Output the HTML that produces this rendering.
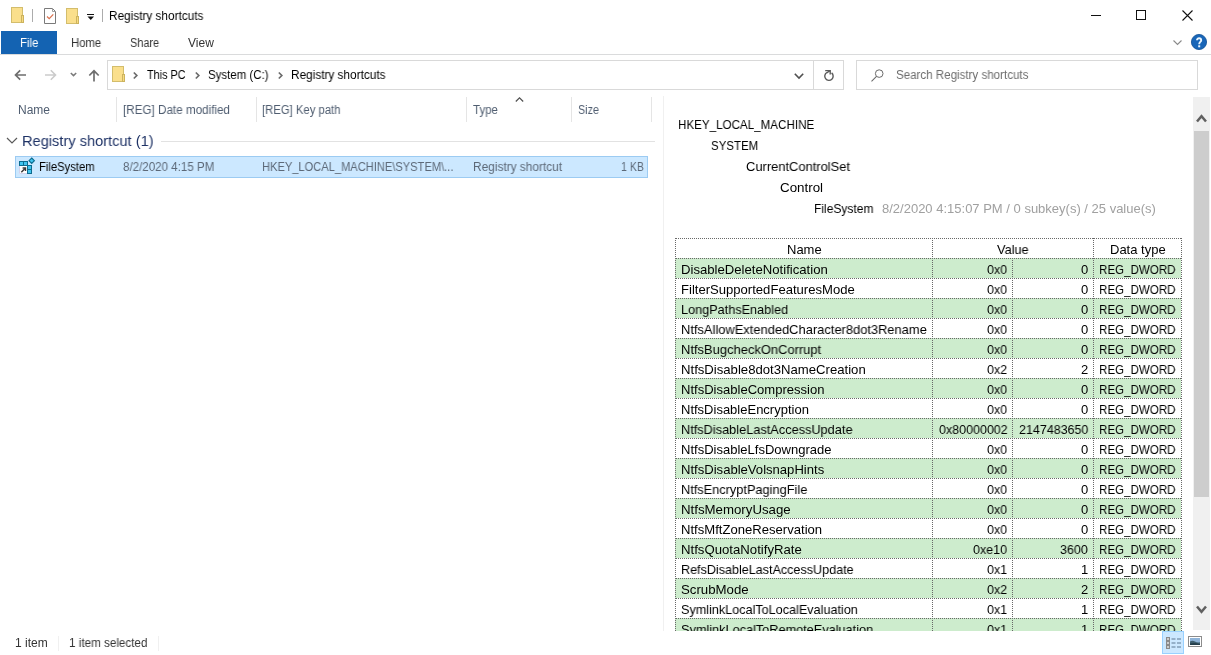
<!DOCTYPE html>
<html><head><meta charset="utf-8">
<style>
html,body{margin:0;padding:0;background:#fff;width:1211px;height:655px;overflow:hidden;position:relative;font-family:"Liberation Sans",sans-serif;}
.abs{position:absolute;}
.t{position:absolute;white-space:pre;line-height:1;transform-origin:0 0;will-change:transform;font-family:"Liberation Sans",sans-serif;}
.hd{position:absolute;height:1px;background-image:linear-gradient(to right,transparent 50%,#686868 50%);background-size:2px 1px;}
.vd{position:absolute;width:1px;background-image:linear-gradient(to bottom,#686868 50%,transparent 50%);background-size:1px 2px;}
svg{position:absolute;overflow:visible;}
</style></head><body>
<!-- ribbon -->
<div class="abs" style="left:1px;top:31px;width:56px;height:23px;background:#1463b2"></div>
<div class="abs" style="left:0;top:54px;width:1211px;height:1px;background:#dadbdc"></div>
<!-- address box -->
<div class="abs" style="left:107px;top:60px;width:735px;height:28px;border:1px solid #d9d9d9"></div>
<div class="abs" style="left:813px;top:61px;width:1px;height:28px;background:#d9d9d9"></div>
<!-- search box -->
<div class="abs" style="left:856px;top:60px;width:340px;height:28px;border:1px solid #d9d9d9"></div>
<!-- column dividers -->
<div class="abs" style="left:116px;top:97px;width:1px;height:25px;background:#e5e5e5"></div>
<div class="abs" style="left:256px;top:97px;width:1px;height:25px;background:#e5e5e5"></div>
<div class="abs" style="left:466px;top:97px;width:1px;height:25px;background:#e5e5e5"></div>
<div class="abs" style="left:571px;top:97px;width:1px;height:25px;background:#e5e5e5"></div>
<div class="abs" style="left:651px;top:97px;width:1px;height:25px;background:#e5e5e5"></div>
<!-- pane separator -->
<div class="abs" style="left:663px;top:96px;width:1px;height:535px;background:#f0f0f0"></div>
<!-- group line -->
<div class="abs" style="left:161px;top:141px;width:494px;height:1px;background:#e2e2e2"></div>
<!-- selection -->
<div class="abs" style="left:15px;top:156px;width:631px;height:20px;border:1px solid #9ccbf2;background:#cce8ff"></div>
<!-- scrollbar -->
<div class="abs" style="left:1193px;top:97px;width:17px;height:533px;background:#f0f0f0"></div>
<div class="abs" style="left:1194px;top:131px;width:15px;height:366px;background:#cdcdcd"></div>
<!-- status bar view buttons -->
<div class="abs" style="left:58px;top:636px;width:1px;height:15px;background:#f0f0f0"></div>
<div class="abs" style="left:158px;top:636px;width:1px;height:15px;background:#f0f0f0"></div>
<div class="abs" style="left:1162px;top:631px;width:20px;height:21px;border:1px solid #99d1ff;background:#cce8ff"></div>
<div class="abs" style="left:675px;top:258px;width:506px;height:20px;background:#cdeccd"></div>
<div class="abs" style="left:675px;top:298px;width:506px;height:20px;background:#cdeccd"></div>
<div class="abs" style="left:675px;top:338px;width:506px;height:20px;background:#cdeccd"></div>
<div class="abs" style="left:675px;top:378px;width:506px;height:20px;background:#cdeccd"></div>
<div class="abs" style="left:675px;top:418px;width:506px;height:20px;background:#cdeccd"></div>
<div class="abs" style="left:675px;top:458px;width:506px;height:20px;background:#cdeccd"></div>
<div class="abs" style="left:675px;top:498px;width:506px;height:20px;background:#cdeccd"></div>
<div class="abs" style="left:675px;top:538px;width:506px;height:20px;background:#cdeccd"></div>
<div class="abs" style="left:675px;top:578px;width:506px;height:20px;background:#cdeccd"></div>
<div class="abs" style="left:675px;top:618px;width:506px;height:20px;background:#cdeccd"></div>
<div class="hd" style="left:675px;top:238px;width:507px"></div>
<div class="hd" style="left:675px;top:258px;width:507px"></div>
<div class="hd" style="left:675px;top:278px;width:507px"></div>
<div class="hd" style="left:675px;top:298px;width:507px"></div>
<div class="hd" style="left:675px;top:318px;width:507px"></div>
<div class="hd" style="left:675px;top:338px;width:507px"></div>
<div class="hd" style="left:675px;top:358px;width:507px"></div>
<div class="hd" style="left:675px;top:378px;width:507px"></div>
<div class="hd" style="left:675px;top:398px;width:507px"></div>
<div class="hd" style="left:675px;top:418px;width:507px"></div>
<div class="hd" style="left:675px;top:438px;width:507px"></div>
<div class="hd" style="left:675px;top:458px;width:507px"></div>
<div class="hd" style="left:675px;top:478px;width:507px"></div>
<div class="hd" style="left:675px;top:498px;width:507px"></div>
<div class="hd" style="left:675px;top:518px;width:507px"></div>
<div class="hd" style="left:675px;top:538px;width:507px"></div>
<div class="hd" style="left:675px;top:558px;width:507px"></div>
<div class="hd" style="left:675px;top:578px;width:507px"></div>
<div class="hd" style="left:675px;top:598px;width:507px"></div>
<div class="hd" style="left:675px;top:618px;width:507px"></div>
<div class="hd" style="left:675px;top:638px;width:507px"></div>
<div class="vd" style="left:675px;top:238px;height:400px"></div>
<div class="vd" style="left:932px;top:238px;height:400px"></div>
<div class="vd" style="left:1093px;top:238px;height:400px"></div>
<div class="vd" style="left:1181px;top:238px;height:400px"></div>
<div class="vd" style="left:1012px;top:258px;height:380px"></div>
<div class="t" style="left:787.1px;top:243px;font-size:13px;color:#000;">Name</div>
<div class="t" style="left:997.0px;top:243px;font-size:13px;color:#000;transform:scaleX(0.9800);">Value</div>
<div class="t" style="left:1110.0px;top:243px;font-size:13px;color:#000;">Data type</div>
<div class="t" style="left:680.5px;top:263px;font-size:13px;color:#000;transform:scaleX(1.0107);">DisableDeleteNotification</div>
<div class="t" style="left:987.1px;top:263px;font-size:13px;color:#000;transform:scaleX(0.9600);">0x0</div>
<div class="t" style="left:1081.3px;top:263px;font-size:13px;color:#000;transform:scaleX(0.9600);">0</div>
<div class="t" style="left:1098.8px;top:263px;font-size:13px;color:#000;transform:scaleX(0.8900);">REG_DWORD</div>
<div class="t" style="left:680.5px;top:283px;font-size:13px;color:#000;transform:scaleX(1.0058);">FilterSupportedFeaturesMode</div>
<div class="t" style="left:987.1px;top:283px;font-size:13px;color:#000;transform:scaleX(0.9600);">0x0</div>
<div class="t" style="left:1081.3px;top:283px;font-size:13px;color:#000;transform:scaleX(0.9600);">0</div>
<div class="t" style="left:1098.8px;top:283px;font-size:13px;color:#000;transform:scaleX(0.8900);">REG_DWORD</div>
<div class="t" style="left:680.5px;top:303px;font-size:13px;color:#000;transform:scaleX(0.9747);">LongPathsEnabled</div>
<div class="t" style="left:987.1px;top:303px;font-size:13px;color:#000;transform:scaleX(0.9600);">0x0</div>
<div class="t" style="left:1081.3px;top:303px;font-size:13px;color:#000;transform:scaleX(0.9600);">0</div>
<div class="t" style="left:1098.8px;top:303px;font-size:13px;color:#000;transform:scaleX(0.8900);">REG_DWORD</div>
<div class="t" style="left:680.5px;top:323px;font-size:13px;color:#000;transform:scaleX(0.9917);">NtfsAllowExtendedCharacter8dot3Rename</div>
<div class="t" style="left:987.1px;top:323px;font-size:13px;color:#000;transform:scaleX(0.9600);">0x0</div>
<div class="t" style="left:1081.3px;top:323px;font-size:13px;color:#000;transform:scaleX(0.9600);">0</div>
<div class="t" style="left:1098.8px;top:323px;font-size:13px;color:#000;transform:scaleX(0.8900);">REG_DWORD</div>
<div class="t" style="left:680.5px;top:343px;font-size:13px;color:#000;transform:scaleX(0.9950);">NtfsBugcheckOnCorrupt</div>
<div class="t" style="left:987.1px;top:343px;font-size:13px;color:#000;transform:scaleX(0.9600);">0x0</div>
<div class="t" style="left:1081.3px;top:343px;font-size:13px;color:#000;transform:scaleX(0.9600);">0</div>
<div class="t" style="left:1098.8px;top:343px;font-size:13px;color:#000;transform:scaleX(0.8900);">REG_DWORD</div>
<div class="t" style="left:680.5px;top:363px;font-size:13px;color:#000;transform:scaleX(1.0103);">NtfsDisable8dot3NameCreation</div>
<div class="t" style="left:987.1px;top:363px;font-size:13px;color:#000;transform:scaleX(0.9600);">0x2</div>
<div class="t" style="left:1081.3px;top:363px;font-size:13px;color:#000;transform:scaleX(0.9600);">2</div>
<div class="t" style="left:1098.8px;top:363px;font-size:13px;color:#000;transform:scaleX(0.8900);">REG_DWORD</div>
<div class="t" style="left:680.5px;top:383px;font-size:13px;color:#000;transform:scaleX(1.0031);">NtfsDisableCompression</div>
<div class="t" style="left:987.1px;top:383px;font-size:13px;color:#000;transform:scaleX(0.9600);">0x0</div>
<div class="t" style="left:1081.3px;top:383px;font-size:13px;color:#000;transform:scaleX(0.9600);">0</div>
<div class="t" style="left:1098.8px;top:383px;font-size:13px;color:#000;transform:scaleX(0.8900);">REG_DWORD</div>
<div class="t" style="left:680.5px;top:403px;font-size:13px;color:#000;transform:scaleX(0.9993);">NtfsDisableEncryption</div>
<div class="t" style="left:987.1px;top:403px;font-size:13px;color:#000;transform:scaleX(0.9600);">0x0</div>
<div class="t" style="left:1081.3px;top:403px;font-size:13px;color:#000;transform:scaleX(0.9600);">0</div>
<div class="t" style="left:1098.8px;top:403px;font-size:13px;color:#000;transform:scaleX(0.8900);">REG_DWORD</div>
<div class="t" style="left:680.5px;top:423px;font-size:13px;color:#000;transform:scaleX(0.9808);">NtfsDisableLastAccessUpdate</div>
<div class="t" style="left:938.5px;top:423px;font-size:13px;color:#000;transform:scaleX(0.9600);">0x80000002</div>
<div class="t" style="left:1018.8px;top:423px;font-size:13px;color:#000;transform:scaleX(0.9600);">2147483650</div>
<div class="t" style="left:1098.8px;top:423px;font-size:13px;color:#000;transform:scaleX(0.8900);">REG_DWORD</div>
<div class="t" style="left:680.5px;top:443px;font-size:13px;color:#000;transform:scaleX(1.0014);">NtfsDisableLfsDowngrade</div>
<div class="t" style="left:987.1px;top:443px;font-size:13px;color:#000;transform:scaleX(0.9600);">0x0</div>
<div class="t" style="left:1081.3px;top:443px;font-size:13px;color:#000;transform:scaleX(0.9600);">0</div>
<div class="t" style="left:1098.8px;top:443px;font-size:13px;color:#000;transform:scaleX(0.8900);">REG_DWORD</div>
<div class="t" style="left:680.5px;top:463px;font-size:13px;color:#000;transform:scaleX(1.0059);">NtfsDisableVolsnapHints</div>
<div class="t" style="left:987.1px;top:463px;font-size:13px;color:#000;transform:scaleX(0.9600);">0x0</div>
<div class="t" style="left:1081.3px;top:463px;font-size:13px;color:#000;transform:scaleX(0.9600);">0</div>
<div class="t" style="left:1098.8px;top:463px;font-size:13px;color:#000;transform:scaleX(0.8900);">REG_DWORD</div>
<div class="t" style="left:680.5px;top:483px;font-size:13px;color:#000;transform:scaleX(0.9819);">NtfsEncryptPagingFile</div>
<div class="t" style="left:987.1px;top:483px;font-size:13px;color:#000;transform:scaleX(0.9600);">0x0</div>
<div class="t" style="left:1081.3px;top:483px;font-size:13px;color:#000;transform:scaleX(0.9600);">0</div>
<div class="t" style="left:1098.8px;top:483px;font-size:13px;color:#000;transform:scaleX(0.8900);">REG_DWORD</div>
<div class="t" style="left:680.5px;top:503px;font-size:13px;color:#000;transform:scaleX(1.0191);">NtfsMemoryUsage</div>
<div class="t" style="left:987.1px;top:503px;font-size:13px;color:#000;transform:scaleX(0.9600);">0x0</div>
<div class="t" style="left:1081.3px;top:503px;font-size:13px;color:#000;transform:scaleX(0.9600);">0</div>
<div class="t" style="left:1098.8px;top:503px;font-size:13px;color:#000;transform:scaleX(0.8900);">REG_DWORD</div>
<div class="t" style="left:680.5px;top:523px;font-size:13px;color:#000;transform:scaleX(1.0066);">NtfsMftZoneReservation</div>
<div class="t" style="left:987.1px;top:523px;font-size:13px;color:#000;transform:scaleX(0.9600);">0x0</div>
<div class="t" style="left:1081.3px;top:523px;font-size:13px;color:#000;transform:scaleX(0.9600);">0</div>
<div class="t" style="left:1098.8px;top:523px;font-size:13px;color:#000;transform:scaleX(0.8900);">REG_DWORD</div>
<div class="t" style="left:680.5px;top:543px;font-size:13px;color:#000;transform:scaleX(1.0133);">NtfsQuotaNotifyRate</div>
<div class="t" style="left:973.2px;top:543px;font-size:13px;color:#000;transform:scaleX(0.9600);">0xe10</div>
<div class="t" style="left:1060.4px;top:543px;font-size:13px;color:#000;transform:scaleX(0.9600);">3600</div>
<div class="t" style="left:1098.8px;top:543px;font-size:13px;color:#000;transform:scaleX(0.8900);">REG_DWORD</div>
<div class="t" style="left:680.5px;top:563px;font-size:13px;color:#000;transform:scaleX(0.9670);">RefsDisableLastAccessUpdate</div>
<div class="t" style="left:987.1px;top:563px;font-size:13px;color:#000;transform:scaleX(0.9600);">0x1</div>
<div class="t" style="left:1081.3px;top:563px;font-size:13px;color:#000;transform:scaleX(0.9600);">1</div>
<div class="t" style="left:1098.8px;top:563px;font-size:13px;color:#000;transform:scaleX(0.8900);">REG_DWORD</div>
<div class="t" style="left:680.5px;top:583px;font-size:13px;color:#000;transform:scaleX(1.0183);">ScrubMode</div>
<div class="t" style="left:987.1px;top:583px;font-size:13px;color:#000;transform:scaleX(0.9600);">0x2</div>
<div class="t" style="left:1081.3px;top:583px;font-size:13px;color:#000;transform:scaleX(0.9600);">2</div>
<div class="t" style="left:1098.8px;top:583px;font-size:13px;color:#000;transform:scaleX(0.8900);">REG_DWORD</div>
<div class="t" style="left:680.5px;top:603px;font-size:13px;color:#000;transform:scaleX(0.9708);">SymlinkLocalToLocalEvaluation</div>
<div class="t" style="left:987.1px;top:603px;font-size:13px;color:#000;transform:scaleX(0.9600);">0x1</div>
<div class="t" style="left:1081.3px;top:603px;font-size:13px;color:#000;transform:scaleX(0.9600);">1</div>
<div class="t" style="left:1098.8px;top:603px;font-size:13px;color:#000;transform:scaleX(0.8900);">REG_DWORD</div>
<div class="t" style="left:680.5px;top:623px;font-size:13px;color:#000;transform:scaleX(0.9779);">SymlinkLocalToRemoteEvaluation</div>
<div class="t" style="left:987.1px;top:623px;font-size:13px;color:#000;transform:scaleX(0.9600);">0x1</div>
<div class="t" style="left:1081.3px;top:623px;font-size:13px;color:#000;transform:scaleX(0.9600);">1</div>
<div class="t" style="left:1098.8px;top:623px;font-size:13px;color:#000;transform:scaleX(0.8900);">REG_DWORD</div>
<div class="abs" style="left:664px;top:631px;width:529px;height:24px;background:#fff"></div>
<div class="abs" style="left:1162px;top:631px;width:20px;height:21px;border:1px solid #99d1ff;background:#cce8ff"></div>
<!-- folder 1 -->
<svg style="left:11px;top:7px" width="14" height="17" viewBox="0 0 14 17">
<rect x="0.5" y="0.5" width="11" height="15" fill="#fadf8c" stroke="#d3bd6c" stroke-width="1"/>
<rect x="10.5" y="8.5" width="2" height="7" fill="#f7da80" stroke="#ccb35e" stroke-width="1"/>
</svg>
<div class="abs" style="left:32px;top:9px;width:1px;height:13px;background:#acacac"></div>
<!-- doc with check -->
<svg style="left:44px;top:8px" width="13" height="16" viewBox="0 0 13 16">
<path d="M0.5 0.5 H8.5 L11.5 3.5 V15.5 H0.5 Z" fill="#fff" stroke="#7a7a7a" stroke-linejoin="miter"/>
<path d="M8.5 0.5 V3.5 H11.5" fill="none" stroke="#a0a0a0" stroke-linejoin="miter"/>
<path d="M3 8.5 L5.2 10.6 L9.3 6.3" fill="none" stroke="#d9714f" stroke-width="1.2"/>
</svg>
<!-- folder 2 -->
<svg style="left:66px;top:8px" width="14" height="16" viewBox="0 0 14 16">
<rect x="0.5" y="0.5" width="11" height="15" fill="#fadf8c" stroke="#d3bd6c" stroke-width="1"/>
<rect x="10.5" y="8.5" width="2" height="7" fill="#f7da80" stroke="#ccb35e" stroke-width="1"/>
</svg>
<!-- qat dropdown -->
<svg style="left:87px;top:14px" width="8" height="7" viewBox="0 0 8 7">
<rect x="0" y="0" width="7" height="1" fill="#111"/>
<path d="M0.5 2.5 H7 L3.75 6 Z" fill="#111"/>
</svg>
<div class="abs" style="left:102px;top:9px;width:1px;height:13px;background:#acacac"></div>
<!-- window controls -->
<div class="abs" style="left:1091px;top:15px;width:10px;height:1px;background:#111"></div>
<div class="abs" style="left:1136px;top:10px;width:8px;height:8px;border:1px solid #111"></div>
<svg style="left:1182px;top:10px" width="11" height="11" viewBox="0 0 11 11">
<path d="M0.5 0.5 L10.5 10.5 M10.5 0.5 L0.5 10.5" stroke="#111" stroke-width="1.1"/>
</svg>
<!-- ribbon chevron -->
<svg style="left:1173px;top:40px" width="9" height="5" viewBox="0 0 9 5">
<path d="M0.5 0.5 L4.5 4.5 L8.5 0.5" fill="none" stroke="#8a8a8a" stroke-width="1.1"/>
</svg>
<!-- help -->
<svg style="left:1191px;top:34px" width="16" height="16" viewBox="0 0 16 16">
<circle cx="8" cy="8" r="7.6" fill="#1966b8" stroke="#0f4f94" stroke-width="0.8"/>
<path d="M6 6.2 C6 3.6 10.2 3.6 10.2 6.2 C10.2 7.9 8.2 8 8.2 10.2" fill="none" stroke="#eaf6ff" stroke-width="1.9"/>
<rect x="7.2" y="11.3" width="2" height="2" fill="#eaf6ff"/>
</svg>
<!-- nav arrows -->
<svg style="left:14px;top:69px" width="13" height="12" viewBox="0 0 13 12">
<path d="M12 6 H1.8 M6.2 1.3 L1.5 6 L6.2 10.7" fill="none" stroke="#6e6e6e" stroke-width="1.7"/>
</svg>
<svg style="left:44px;top:69px" width="13" height="12" viewBox="0 0 13 12">
<path d="M1 6 H11.2 M6.8 1.3 L11.5 6 L6.8 10.7" fill="none" stroke="#cbcbcb" stroke-width="1.6"/>
</svg>
<svg style="left:70px;top:72px" width="7" height="5" viewBox="0 0 7 5">
<path d="M0.8 1 L3.5 3.6 L6.2 1" fill="none" stroke="#7a7a7a" stroke-width="1.5"/>
</svg>
<svg style="left:88px;top:69px" width="12" height="13" viewBox="0 0 12 13">
<path d="M6 12.5 V2 M1.3 6.5 L6 1.8 L10.7 6.5" fill="none" stroke="#6e6e6e" stroke-width="1.7"/>
</svg>
<!-- address folder -->
<svg style="left:112px;top:66px" width="14" height="16" viewBox="0 0 14 16">
<rect x="0.5" y="0.5" width="11" height="15" fill="#fadf8c" stroke="#d3bd6c" stroke-width="1"/>
<rect x="10.5" y="8.5" width="2" height="7" fill="#f7da80" stroke="#ccb35e" stroke-width="1"/>
</svg>
<svg style="left:133px;top:72px" width="5" height="7" viewBox="0 0 5 7">
<path d="M0.8 0.5 L3.8 3.5 L0.8 6.5" fill="none" stroke="#6a6a6a" stroke-width="1.7"/>
</svg>
<svg style="left:195px;top:72px" width="5" height="7" viewBox="0 0 5 7">
<path d="M0.8 0.5 L3.8 3.5 L0.8 6.5" fill="none" stroke="#6a6a6a" stroke-width="1.7"/>
</svg>
<svg style="left:278px;top:72px" width="5" height="7" viewBox="0 0 5 7">
<path d="M0.8 0.5 L3.8 3.5 L0.8 6.5" fill="none" stroke="#6a6a6a" stroke-width="1.7"/>
</svg>
<!-- address dropdown chevron -->
<svg style="left:794px;top:73px" width="10" height="6" viewBox="0 0 10 6">
<path d="M0.8 0.8 L5 5 L9.2 0.8" fill="none" stroke="#505050" stroke-width="1.6"/>
</svg>
<!-- refresh -->
<svg style="left:823px;top:69px" width="12" height="13" viewBox="0 0 12 13">
<path d="M8.6 3.9 A4.2 4.2 0 1 1 3.9 3.5" fill="none" stroke="#5a5a5a" stroke-width="1.4"/>
<path d="M2.2 1.6 H7.2 V5.6" fill="none" stroke="#5a5a5a" stroke-width="1.4"/>
<path d="M3.6 4 L7 1.6" fill="none" stroke="#5a5a5a" stroke-width="1.4"/>
</svg>
<!-- search icon -->
<svg style="left:871px;top:69px" width="13" height="13" viewBox="0 0 13 13">
<circle cx="8.2" cy="4.6" r="3.8" fill="none" stroke="#6a6a6a" stroke-width="1"/>
<path d="M5.5 7.3 L0.5 12.3" stroke="#6a6a6a" stroke-width="1.1"/>
</svg>
<!-- sort chevron -->
<svg style="left:515px;top:97px" width="9" height="5" viewBox="0 0 9 5">
<path d="M0.8 4.5 L4.5 0.8 L8.2 4.5" fill="none" stroke="#505050" stroke-width="1.2"/>
</svg>
<!-- group chevron -->
<svg style="left:6px;top:137px" width="12" height="7" viewBox="0 0 12 7">
<path d="M1 1 L6 6 L11 1" fill="none" stroke="#5a5a5a" stroke-width="1.2"/>
</svg>
<!-- reg shortcut icon -->
<svg style="left:19px;top:157px" width="17" height="18" viewBox="0 0 17 18">
<rect x="0" y="4" width="9" height="5" fill="#0c6c8f"/>
<rect x="1" y="5" width="3" height="3" fill="#40c4ef"/>
<rect x="5" y="5" width="3" height="3" fill="#40c4ef"/>
<rect x="8" y="8" width="5" height="9" fill="#0c6c8f"/>
<rect x="9" y="9" width="3" height="3" fill="#40c4ef"/>
<rect x="9" y="13" width="3" height="3" fill="#40c4ef"/>
<rect x="0" y="9" width="8" height="8" fill="#fff"/>
<path d="M0.5 9 V16.5 H8" fill="none" stroke="#c8c8e8" stroke-width="0.8"/>
<path d="M2.3 15.2 L6 11.5" fill="none" stroke="#3a3a3a" stroke-width="1.5"/>
<path d="M3.6 11 H6.5 V13.9" fill="none" stroke="#3a3a3a" stroke-width="1.4"/>
<path d="M12.7 1 L15.4 3.7 L12.7 6.4 L10 3.7 Z" fill="#40c4ef" stroke="#0c6c8f" stroke-width="1.1"/>
</svg>
<!-- scrollbar arrows -->
<svg style="left:1196px;top:114px" width="11" height="9" viewBox="0 0 11 9">
<path d="M1 7.5 L5.5 2.2 L10 7.5" fill="none" stroke="#606060" stroke-width="2.5"/>
</svg>
<svg style="left:1196px;top:605px" width="11" height="9" viewBox="0 0 11 9">
<path d="M1 1.5 L5.5 6.8 L10 1.5" fill="none" stroke="#606060" stroke-width="2.5"/>
</svg>
<!-- details view icon -->
<svg style="left:1166px;top:637px" width="16" height="12" viewBox="0 0 16 12">
<rect x="0.5" y="0.5" width="3" height="3" fill="#fff" stroke="#8a8a8a" stroke-width="1"/>
<rect x="0.5" y="4.5" width="3" height="3" fill="#fff" stroke="#8a8a8a" stroke-width="1"/>
<rect x="0.5" y="8.5" width="3" height="3" fill="#fff" stroke="#8a8a8a" stroke-width="1"/>
<rect x="1.5" y="1.5" width="1" height="1" fill="#333"/>
<rect x="1.5" y="5.5" width="1" height="1" fill="#333"/>
<rect x="1.5" y="9.5" width="1" height="1" fill="#333"/>
<path d="M5.5 2 H9.5 M11 2 H15 M5.5 6 H9.5 M11 6 H15 M5.5 10 H9.5 M11 10 H15" stroke="#5d7893" stroke-width="1"/>
</svg>
<!-- preview icon -->
<svg style="left:1188px;top:636px" width="14" height="11" viewBox="0 0 14 11">
<rect x="0.5" y="0.5" width="13" height="10" fill="#fff" stroke="#8c8c8c"/>
<rect x="2" y="2" width="10" height="7" fill="#8fb4d9"/>
<path d="M2 5.5 Q4.5 4.2 7 5.6 T12 6.2 V9 H2 Z" fill="#3f5f6f"/>
<path d="M2 7.5 Q6 6.5 12 8 V9 H2 Z" fill="#26404c"/>
</svg>

<div class="t" style="left:109.4px;top:10px;font-size:12px;color:#000;transform:scaleX(0.9830);">Registry shortcuts</div>
<div class="t" style="left:19.5px;top:37px;font-size:12px;color:#fff;transform:scaleX(0.9512);">File</div>
<div class="t" style="left:70.6px;top:37px;font-size:12px;color:#333;transform:scaleX(0.9433);">Home</div>
<div class="t" style="left:129.5px;top:37px;font-size:12px;color:#333;transform:scaleX(0.9116);">Share</div>
<div class="t" style="left:187.5px;top:37px;font-size:12px;color:#333;transform:scaleX(0.9962);">View</div>
<div class="t" style="left:147.0px;top:69px;font-size:12px;color:#000;transform:scaleX(0.9019);">This PC</div>
<div class="t" style="left:208.2px;top:69px;font-size:12px;color:#000;transform:scaleX(0.9567);">System (C:)</div>
<div class="t" style="left:291.3px;top:69px;font-size:12px;color:#000;transform:scaleX(0.9841);">Registry shortcuts</div>
<div class="t" style="left:896.2px;top:69px;font-size:12px;color:#6d6d6d;transform:scaleX(0.9637);">Search Registry shortcuts</div>
<div class="t" style="left:17.8px;top:104px;font-size:12px;color:#4f5d70;transform:scaleX(0.9964);">Name</div>
<div class="t" style="left:122.5px;top:104px;font-size:12px;color:#4f5d70;transform:scaleX(0.9723);">[REG] Date modified</div>
<div class="t" style="left:262.4px;top:104px;font-size:12px;color:#4f5d70;transform:scaleX(0.9415);">[REG] Key path</div>
<div class="t" style="left:472.6px;top:104px;font-size:12px;color:#4f5d70;transform:scaleX(0.9571);">Type</div>
<div class="t" style="left:577.5px;top:104px;font-size:12px;color:#4f5d70;transform:scaleX(0.8953);">Size</div>
<div class="t" style="left:21.8px;top:133px;font-size:15px;color:#1f3366;transform:scaleX(0.9745);">Registry shortcut (1)</div>
<div class="t" style="left:38.6px;top:161px;font-size:12px;color:#000;transform:scaleX(0.9386);">FileSystem</div>
<div class="t" style="left:122.5px;top:161px;font-size:12px;color:#5d6978;transform:scaleX(0.9637);">8/2/2020 4:15 PM</div>
<div class="t" style="left:262.4px;top:161px;font-size:12px;color:#5d6978;transform:scaleX(0.9258);">HKEY_LOCAL_MACHINE\SYSTEM\...</div>
<div class="t" style="left:472.6px;top:161px;font-size:12px;color:#5d6978;transform:scaleX(0.9897);">Registry shortcut</div>
<div class="t" style="left:620.8px;top:161px;font-size:12px;color:#5d6978;transform:scaleX(0.8841);">1 KB</div>
<div class="t" style="left:14.9px;top:637px;font-size:12px;color:#333;transform:scaleX(0.9943);">1 item</div>
<div class="t" style="left:69.0px;top:637px;font-size:12px;color:#333;transform:scaleX(0.9725);">1 item selected</div>
<div class="t" style="left:677.5px;top:118px;font-size:13px;color:#000;transform:scaleX(0.8934);">HKEY_LOCAL_MACHINE</div>
<div class="t" style="left:711.4px;top:139px;font-size:13px;color:#000;transform:scaleX(0.8846);">SYSTEM</div>
<div class="t" style="left:745.6px;top:160px;font-size:13px;color:#000;transform:scaleX(0.9925);">CurrentControlSet</div>
<div class="t" style="left:779.8px;top:181px;font-size:13px;color:#000;transform:scaleX(1.0281);">Control</div>
<div class="t" style="left:813.7px;top:202px;font-size:13px;color:#000;transform:scaleX(0.9254);">FileSystem</div>
<div class="t" style="left:881.8px;top:202px;font-size:13px;color:#a0a0a0;transform:scaleX(0.9983);">8/2/2020 4:15:07 PM / 0 subkey(s) / 25 value(s)</div>
</body></html>
